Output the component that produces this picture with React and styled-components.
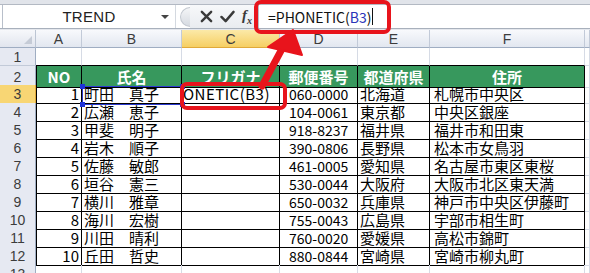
import React from 'react';
import styled, { createGlobalStyle } from 'styled-components';

const GlobalStyle = createGlobalStyle`
  html, body {
    margin: 0;
    padding: 0;
    background: #fff;
  }
  body {
    font-family: "Noto Sans CJK JP", "Noto Sans", sans-serif;
  }
  * {
    box-sizing: border-box;
  }
`;

const COLS = '36px 46px 100px 98px 78px 72px 155px 1fr';
const LETTERS = ['A', 'B', 'C', 'D', 'E', 'F', ''];
const HEAD = ['NO', '氏名', 'フリガナ', '郵便番号', '都道府県', '住所'];

const people = [
    ['1', '町田　真子', '060-0000', '北海道', '札幌市中央区'],
    ['2', '広瀬　恵子', '104-0061', '東京都', '中央区銀座'],
    ['3', '甲斐　明子', '918-8237', '福井県', '福井市和田東'],
    ['4', '岩木　順子', '390-0806', '長野県', '松本市女鳥羽'],
    ['5', '佐藤　敏郎', '461-0005', '愛知県', '名古屋市東区東桜'],
    ['6', '垣谷　憲三', '530-0044', '大阪府', '大阪市北区東天満'],
    ['7', '横川　雅章', '650-0032', '兵庫県', '神戸市中央区伊藤町'],
    ['8', '海川　宏樹', '755-0043', '広島県', '宇部市相生町'],
    ['9', '川田　晴利', '760-0020', '愛媛県', '高松市錦町'],
    ['10', '丘田　哲史', '880-0844', '宮崎県', '宮崎市柳丸町'],
];

function App() {
    return (
        <Page>
            <GlobalStyle />
            <TopStrip />
            <FormulaRow>
                <NameBox>
                    <span>TREND</span>
                    <DropArrow />
                </NameBox>
                <Grip />
                <Tools>
                    <svg width="13" height="13" viewBox="0 0 14 14">
                        <path d="M2 2 L12 12 M12 2 L2 12" stroke="#3a3a3a" strokeWidth="2.6" strokeLinecap="round" />
                    </svg>
                    <svg width="15" height="13" viewBox="0 0 16 14">
                        <path d="M1.5 7.5 L6 12 L14.5 2" stroke="#3a3a3a" strokeWidth="2.6" fill="none" strokeLinecap="round" strokeLinejoin="round" />
                    </svg>
                    <Fx>f<sub>x</sub></Fx>
                </Tools>
                <FormulaInput>
                    =PHONETIC(<Ref>B3</Ref>)<Caret />
                </FormulaInput>
            </FormulaRow>
            <Gap />

            <SheetRow $h={18}>
                <Corner />
                {LETTERS.map((l, i) => (
                    <ColHeader key={i} $active={l === 'C'}>{l}</ColHeader>
                ))}
            </SheetRow>

            <SheetRow $h={18}>
                <RowHeader>1</RowHeader>
                {LETTERS.map((_, i) => <Cell key={i} $bottomBlack={i < 6} />)}
            </SheetRow>

            <SheetRow $h={19}>
                <RowHeader>2</RowHeader>
                {HEAD.map((t, i) => (
                    <HeadCell key={i} $first={i === 0}>{t}</HeadCell>
                ))}
                <Cell />
            </SheetRow>

            {people.map((p, r) => (
                <SheetRow $h={18} key={r}>
                    <RowHeader $active={r === 0}>{r + 3}</RowHeader>
                    <Cell $table $first $align="right">{p[0]}</Cell>
                    <Cell $table>{p[1]}</Cell>
                    <Cell $table $align="right" $clip>
                        {r === 0 && <EditText>=PHONETIC(B3)</EditText>}
                    </Cell>
                    <Cell $table $pad={9} $small>{p[2]}</Cell>
                    <Cell $table>{p[3]}</Cell>
                    <Cell $table $pad={4}>{p[4]}</Cell>
                    <Cell />
                </SheetRow>
            ))}

            <SheetRow $h={18}>
                <RowHeader>13</RowHeader>
                {LETTERS.map((_, i) => <Cell key={i} />)}
            </SheetRow>

            <RefBox>
                <Handle $x="left" $y="top" />
                <Handle $x="right" $y="top" />
                <Handle $x="left" $y="bottom" />
                <Handle $x="right" $y="bottom" />
            </RefBox>

            <RedBox $x={254} $y={0} $w={137} $h={34} />
            <RedBox $x={180} $y={82} $w={107} $h={28} />

            <Arrow width="590" height="273" viewBox="0 0 590 273">
                <line x1="262" y1="86" x2="283" y2="47" stroke="#e8141c" strokeWidth="7" strokeLinecap="round" />
                <polygon points="268,47 302,55 293,30" fill="#e8141c" stroke="#e8141c" strokeWidth="2" strokeLinejoin="round" />
            </Arrow>
        </Page>
    );
}

const Page = styled.div`
    position: relative;
    width: 590px;
    height: 273px;
    overflow: hidden;
    background: #fff;
`;

const TopStrip = styled.div`
    height: 5px;
    background: #e1e4ea;
    border-bottom: 1px solid #b3b9c3;
`;

const FormulaRow = styled.div`
    display: flex;
    align-items: stretch;
    height: 24px;
    background: #fff;
    border-bottom: 1px solid #a8b0bc;
`;

const NameBox = styled.div`
    position: relative;
    display: flex;
    align-items: center;
    justify-content: center;
    width: 174px;
    margin-left: 2px;
    border-left: 1px solid #b8bfca;
    border-right: 1px solid #d4d9e0;
    font-family: "Liberation Sans", Arial, sans-serif;
    font-size: 15px;
    color: #222;
    letter-spacing: 0.3px;
`;

const DropArrow = styled.i`
    position: absolute;
    right: 6px;
    top: 10px;
    width: 0;
    height: 0;
    border-left: 4px solid transparent;
    border-right: 4px solid transparent;
    border-top: 4px solid #444;
`;

const Grip = styled.div`
    width: 10px;
    height: 20px;
    margin: 2px 0 0 4px;
    border-radius: 10px 0 0 10px;
    background: linear-gradient(#f4f5f7, #d6dae1);
    border: 1px solid #c3c8d0;
    border-right: none;
`;

const Tools = styled.div`
    display: flex;
    align-items: center;
    gap: 7px;
    padding: 0 6px 0 10px;
    background: linear-gradient(#f7f8fa, #e9ecf0);
`;

const Fx = styled.span`
    font-family: "Liberation Serif", "Times New Roman", serif;
    font-style: italic;
    font-weight: bold;
    font-size: 15px;
    color: #3a3a3a;
    line-height: 1;

    sub {
        font-size: 10px;
    }
`;

const FormulaInput = styled.div`
    flex: 1;
    display: flex;
    align-items: center;
    padding-left: 9px;
    border-left: 1px solid #b8bfca;
    font-size: 14px;
    color: #111;
    white-space: pre;
`;

const Ref = styled.span`
    color: #2a33b8;
`;

const Caret = styled.i`
    display: inline-block;
    width: 1px;
    height: 17px;
    margin-left: 1px;
    background: #111;
`;

const Gap = styled.div`
    height: 1px;
    background: #e4e7ed;
`;

const SheetRow = styled.div`
    display: grid;
    grid-template-columns: ${COLS};
    height: ${p => p.$h}px;
`;

const Corner = styled.div`
    position: relative;
    background: linear-gradient(#f7f8fb, #e1e5ee);
    border-right: 1px solid #bcc5d3;
    border-bottom: 1px solid #9fadc2;

    &::after {
        content: '';
        position: absolute;
        right: 3px;
        bottom: 3px;
        border-left: 8px solid transparent;
        border-bottom: 8px solid #c5cbd6;
    }
`;

const ColHeader = styled.div`
    display: flex;
    align-items: center;
    justify-content: center;
    font-family: "Liberation Sans", Arial, sans-serif;
    font-size: 14px;
    color: #3c3c3c;
    background: ${p => p.$active
        ? 'linear-gradient(#fbe9a8, #f6cf63)'
        : 'linear-gradient(#f8f9fc, #e2e7f0)'};
    border-right: 1px solid #c2cad8;
    border-bottom: 1px solid ${p => p.$active ? '#e0a93a' : '#9fadc2'};
`;

const RowHeader = styled.div`
    display: flex;
    align-items: center;
    justify-content: center;
    font-family: "Liberation Sans", Arial, sans-serif;
    font-size: 14px;
    color: #3c3c3c;
    background: ${p => p.$active ? '#f8d674' : '#e6e9f2'};
    border-right: 1px solid ${p => p.$active ? '#e0a93a' : '#9fadc2'};
    border-bottom: 1px solid ${p => p.$active ? '#e0a93a' : '#c2cad8'};
`;

const Cell = styled.div`
    display: flex;
    align-items: center;
    justify-content: ${p => p.$align === 'right' ? 'flex-end' : 'flex-start'};
    padding: 0 ${p => p.$align === 'right' ? 2 : 0}px 0 ${p => p.$pad ?? 2}px;
    overflow: ${p => p.$clip ? 'hidden' : 'visible'};
    white-space: nowrap;
    font-size: ${p => p.$small ? 14 : 15}px;
    line-height: 18px;
    color: #000;
    border-right: 1px solid ${p => p.$table ? '#000' : '#d6dbe5'};
    border-bottom: 1px solid ${p => (p.$table || p.$bottomBlack) ? '#000' : '#d6dbe5'};
    border-left: ${p => p.$first ? '1px solid #000' : 'none'};
`;

const HeadCell = styled.div`
    display: flex;
    align-items: center;
    justify-content: center;
    background: #37985d;
    color: #fff;
    font-weight: bold;
    font-size: 15px;
    white-space: nowrap;
    border-right: 1px solid #000;
    border-bottom: 1px solid #000;
    border-left: ${p => p.$first ? '1px solid #000' : 'none'};
`;

const EditText = styled.span`
    padding-right: 7px;
    font-size: 15px;
    letter-spacing: 0.5px;
`;

const RefBox = styled.div`
    position: absolute;
    left: 82px;
    top: 86px;
    width: 101px;
    height: 19px;
    border: 1px solid #2b3bd0;
`;

const Handle = styled.i`
    position: absolute;
    width: 5px;
    height: 5px;
    background: #1f33d8;
    ${p => p.$x}: -3px;
    ${p => p.$y}: -3px;
`;

const RedBox = styled.div`
    position: absolute;
    left: ${p => p.$x}px;
    top: ${p => p.$y}px;
    width: ${p => p.$w}px;
    height: ${p => p.$h}px;
    border: 4px solid #e8141c;
    border-radius: 7px;
`;

const Arrow = styled.svg`
    position: absolute;
    left: 0;
    top: 0;
    pointer-events: none;
`;

export default App;
